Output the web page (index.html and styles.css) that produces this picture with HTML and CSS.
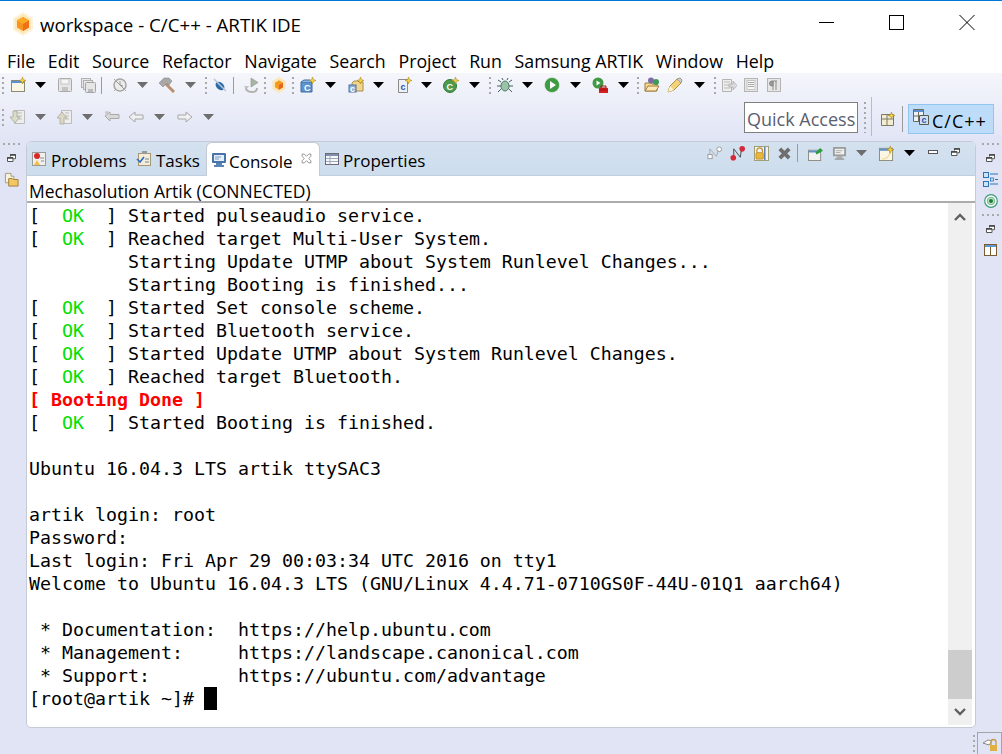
FILE: index.html
```html
<!DOCTYPE html>
<html lang="en">
<head>
<meta charset="utf-8">
<title>workspace - C/C++ - ARTIK IDE</title>
<link rel="stylesheet" href="styles.css">
</head>
<body>
<svg class="defs" aria-hidden="true">
  <symbol id="restore" viewBox="0 0 9 8"><path d="M3.500 2.500V.7h5v4H6.500" fill="#fff" stroke="#555"/><path d="M.5 3.500h5.500v4H.5z" fill="#fff" stroke="#555"/><path d="M3 1h6M0 4h6" stroke="#444" stroke-width="1.400"/></symbol>
  <symbol id="star" viewBox="0 0 8 8"><path d="M4 0l1 3 3 1-3 1-1 3-1-3-3-1 3-1z" fill="#f7d64a" stroke="#b08a20" stroke-width=".7"/></symbol>
</svg>
<header class="titlebar">
  <svg class="logo" viewBox="0 0 20 24"><path d="M10 0l10 6v12l-10 6-10-6V6z" fill="#fdf3dc"/><path d="M10 2l8 5v10l-8 5-8-5V7z" fill="#fce6b8"/><path d="M10 5l6 3.500v7L10 19l-6-3.500v-7z" fill="#f7941d"/><path d="M10 5l6 3.500-6 3.500-6-3.500z" fill="#fbab24"/><path d="M10 12l6-3.500v7L10 19z" fill="#f0701a"/></svg>
  <span class="apptitle">workspace - C/C++ - ARTIK IDE</span>
  <div class="winctl">
    <svg class="wbtn" viewBox="0 0 16 16"><path d="M0 8.500h15" stroke="#000"/></svg>
    <svg class="wbtn" viewBox="0 0 16 16"><rect x=".5" y="1.500" width="14" height="14" fill="none" stroke="#000"/></svg>
    <svg class="wbtn" viewBox="0 0 16 16"><path d="M.5 1l15 15M15.500 1l-15 15" stroke="#000"/></svg>
  </div>
</header>
<nav class="menubar">
  <span>File</span><span>Edit</span><span>Source</span><span>Refactor</span><span>Navigate</span><span>Search</span><span>Project</span><span>Run</span><span>Samsung ARTIK</span><span>Window</span><span>Help</span>
</nav>
<div class="toolbars">
  <div class="tb tb1">
    <i class="grip g-first"></i>
    <svg class="ic m9" viewBox="0 0 16 16"><rect x="1.500" y="3.500" width="13" height="11" fill="#fbf7e4" stroke="#8a8a78"/><path d="M2 4h12v2H2z" fill="#5b8fd0"/><use href="#star" x="9" y="0" width="7" height="7"/></svg>
    <i class="arr m11"></i>
    <svg class="ic m7" viewBox="0 0 16 16"><rect x="1.500" y="1.500" width="13" height="13" rx="1" fill="#e6e6e6" stroke="#a8a8a8"/><rect x="4" y="2" width="8" height="5" fill="#f5f5f5" stroke="#bbb" stroke-width=".8"/><rect x="5" y="10" width="6" height="4" fill="#c4c4c4"/></svg>
    <svg class="ic m5" viewBox="0 0 16 16"><rect x="1.500" y="1.500" width="9" height="9" fill="#e8e8e8" stroke="#b0b0b0"/><rect x="3.500" y="3.500" width="9" height="9" fill="#e8e8e8" stroke="#b0b0b0"/><rect x="5.500" y="5.500" width="10" height="10" rx="1" fill="#e6e6e6" stroke="#a4a4a4"/><rect x="8" y="12" width="5" height="3" fill="#bbb"/></svg>
    <i class="sep m10"></i>
    <svg class="ic m9" viewBox="0 0 16 16"><circle cx="8" cy="8" r="6" fill="#ececec" stroke="#a5a5a5" stroke-width="1.500"/><path d="M4 4l8 8M8 4v4l3 1" stroke="#999" fill="none"/><path d="M2 2l2 2M14 14l-2-2M2 14l2-2" stroke="#aaa"/></svg>
    <i class="arr off m11"></i>
    <svg class="ic m10" viewBox="0 0 16 16"><path d="M6 6l9 9" stroke="#b89070" stroke-width="3"/><path d="M0 6l5-5h5l3 3-3 4-2-2-4 4z" fill="#a8a8a8" stroke="#8c8c8c" stroke-width=".6"/></svg>
    <i class="arr off m9"></i>
    <i class="grip m5"></i>
    <svg class="ic m5" viewBox="0 0 16 16"><ellipse cx="8" cy="9" rx="5" ry="3.500" transform="rotate(40 8 9)" fill="#2b6ca8"/><path d="M2 2l12 12" stroke="#b8c4d8" stroke-width="1.500"/></svg>
    <i class="sep m9"></i>
    <svg class="ic m5" viewBox="0 0 16 16"><path d="M8 1l7 4.500-7 4.500z" fill="#a8b4a4" stroke="#8a968a" stroke-width=".6"/><path d="M3 9c-1 4 2 6 6 6s5-2 5-4" fill="none" stroke="#b0b0b0" stroke-width="1.800"/><path d="M1 9h5l-2 3z" fill="#c4c4c4"/></svg>
    <i class="grip m5"></i>
    <svg class="ic m5" viewBox="0 0 20 24"><path d="M10 0l10 6v12l-10 6-10-6V6z" fill="#fbe6bc"/><path d="M10 5l6 3.500v7L10 19l-6-3.500v-7z" fill="#f59a1c"/><path d="M10 12l6-3.500v7L10 19z" fill="#e8641a"/></svg>
    <i class="grip m6"></i>
    <svg class="ic m9" viewBox="0 0 16 16"><path d="M1 5h11v10H1z" fill="#5c94d0" stroke="#3f6da6"/><path d="M1 5l3-2h6l2 2" fill="#8fb8e0" stroke="#3f6da6"/><text class="mini" x="4" y="14">C</text><use href="#star" x="9" y="0" width="7" height="7"/></svg>
    <i class="arr m12"></i>
    <svg class="ic m9" viewBox="0 0 16 16"><path d="M4 6l2-2h4l1 1h4v9H4z" fill="#f1d58c" stroke="#a88c4c"/><rect x="1" y="8" width="7" height="7" fill="#8ab0dc" stroke="#5070a0"/><text class="mini" x="2" y="14.500">c</text><use href="#star" x="9" y="0" width="7" height="7"/></svg>
    <i class="arr m12"></i>
    <svg class="ic m9" viewBox="0 0 16 16"><path d="M2.500 2.500h9v13h-9z" fill="#eef0f4" stroke="#8a8a8a"/><text class="mini blue" x="4.500" y="13">c</text><use href="#star" x="9" y="0" width="7" height="7"/></svg>
    <i class="arr m11"></i>
    <svg class="ic m10" viewBox="0 0 16 16"><circle cx="7" cy="9" r="6.500" fill="#4d9a4c" stroke="#2f7a3a"/><text class="mini wh" x="3.500" y="13">C</text><use href="#star" x="9" y="0" width="7" height="7"/></svg>
    <i class="arr m9"></i>
    <i class="grip m6"></i>
    <svg class="ic m9" viewBox="0 0 16 16"><ellipse cx="8" cy="9" rx="4" ry="5" fill="#9cc4a4" stroke="#4c7870"/><path d="M4 5L1 3M4 9H0M4 12l-3 3M12 5l3-2M12 9h4M12 12l3 3M6 3L5 1M10 3l1-2" stroke="#44605c"/></svg>
    <i class="arr m11"></i>
    <svg class="ic m10" viewBox="0 0 16 16"><circle cx="8" cy="8" r="7.500" fill="#3f9a44" stroke="#e8efe8" stroke-width=".6"/><path d="M6 4l6 4-6 4z" fill="#fff"/></svg>
    <i class="arr m11"></i>
    <svg class="ic m10" viewBox="0 0 16 16"><circle cx="6" cy="6" r="5.500" fill="#3f9a44"/><path d="M4.500 3.500l4 2.500-4 2.500z" fill="#fff"/><path d="M7 11h9v5H7z" fill="#d82020"/><path d="M9 9h5v2H9zM7 13h9" fill="none" stroke="#a01010"/></svg>
    <i class="arr m8"></i>
    <i class="grip m5"></i>
    <svg class="ic m7" viewBox="0 0 16 16"><path d="M1 6h6l1 1h5v7H1z" fill="#f5d890" stroke="#a07c3c"/><path d="M1 14l3-5h11l-3 5z" fill="#fbe8b4" stroke="#a07c3c"/><circle cx="7" cy="3.500" r="3" fill="#7d6aa8"/><circle cx="12" cy="5" r="3" fill="#3c9a58"/></svg>
    <svg class="ic m11" viewBox="0 0 16 16"><path d="M1 15l2-6 7-7 4 4-7 7z" fill="#f3d27a" stroke="#b09040"/><path d="M10 2l3-1 2 2-1 3z" fill="#cfcfcf" stroke="#999"/><path d="M1 15l2-6 4 4z" fill="#fdf3d0"/></svg>
    <i class="arr m9"></i>
    <i class="grip m5"></i>
    <svg class="ic m6" viewBox="0 0 16 16"><path d="M1.500 2.500h9v12h-9z" fill="#eee" stroke="#b4b4b4"/><path d="M3 5h6M3 8h5M3 11h6" stroke="#bbb"/><path d="M8 7h4V4l4 4.500-4 4.500v-3H8z" fill="#dcdcdc" stroke="#a8a8a8" stroke-width=".7"/></svg>
    <svg class="ic m7" viewBox="0 0 16 16"><rect x="1.500" y="1.500" width="13" height="13" fill="#e6e6e6" stroke="#b4b4b4"/><rect x="4" y="3.500" width="8" height="9" fill="#f6f6f6" stroke="#b4b4b4" stroke-width=".7"/><path d="M5 5.500h6M5 7.500h6M5 9.500h6" stroke="#aaa"/></svg>
    <svg class="ic" viewBox="0 0 16 16"><rect x="1.500" y="1.500" width="13" height="13" fill="#e6e6e6" stroke="#b4b4b4"/><path d="M7 4H6a2.500 2.500 0 000 5h1zM7 4v9M10 4v9M7 4h4" fill="#9a9a9a" stroke="#8a8a8a"/></svg>
  </div>
  <div class="tb2">
    <div class="tb tb2-left">
      <i class="grip g-first"></i>
      <svg class="ic m9" viewBox="0 0 16 16"><path d="M4.500 1.500h10v13h-10z" fill="#eee" stroke="#bbb"/><path d="M7 4h5M7 7h5M7 10h5" stroke="#bbb"/><path d="M3 2h4v6h3l-5 6-5-6h3z" fill="#d8dcc8" stroke="#a8a898" stroke-width=".8"/></svg>
      <i class="arr off m11"></i>
      <svg class="ic m9" viewBox="0 0 16 16"><path d="M4.500 1.500h10v13h-10z" fill="#eee" stroke="#bbb"/><path d="M8 4h4M8 7h4M8 10h4" stroke="#bbb"/><path d="M3 15V9H0l5-6 5 6H7v6z" fill="#dcd8c8" stroke="#a8a898" stroke-width=".8"/></svg>
      <i class="arr off m11"></i>
      <svg class="ic m8" viewBox="0 0 16 16"><path d="M1 7l5-4v2.500h9v4H6V12z" fill="#d8d8d8" stroke="#aaa"/><circle cx="3" cy="4" r="2" fill="#c8c8c8"/></svg>
      <svg class="ic m10" viewBox="0 0 16 16"><path d="M1 8l6-5v3h8v4H7v3z" fill="#f0f0f0" stroke="#a8a8a8"/></svg>
      <i class="arr off m12"></i>
      <svg class="ic m10" viewBox="0 0 16 16"><path d="M15 8L9 3v3H1v4h8v3z" fill="#f0f0f0" stroke="#a8a8a8"/></svg>
      <i class="arr off"></i>
    </div>
    <div class="quick">Quick Access</div>
    <i class="grip g-quick"></i>
    <div class="persp">
      <svg class="ic-sm" viewBox="0 0 14 14"><path d="M.500 2.500h12v11H.500z" fill="#f4ecd0" stroke="#7a7a66"/><path d="M.5 7h12M6 3v10" stroke="#7a7a66"/><use href="#star" x="7" y="0" width="7" height="7"/></svg>
      <i class="sep s-persp"></i>
      <div class="perspbtn">
        <svg class="ic-cc" viewBox="0 0 16 16"><path d="M.5.500h10v12H.5z" fill="#eef2f6" stroke="#6a6a5c"/><path d="M1 1h9v2H1z" fill="#5b8fd0"/><path d="M.5 7h5M5.500 3v9" stroke="#6a6a5c"/><path d="M6.500 6.500h9v9h-9z" fill="#d0e0f0" stroke="#5a5a4c"/><text class="mini blue" x="8.500" y="14">c</text></svg>
        <span>C/C++</span>
      </div>
    </div>
  </div>
</div>
<main class="workbench">
  <aside class="trim trim-left">
    <i class="hgrip"></i>
    <svg class="res"><use href="#restore"/></svg>
    <svg class="tr-ic" viewBox="0 0 16 16"><path d="M1.500 1.500h6v3h3v7h-9z" fill="#f7f2e0" stroke="#aa9a70"/><path d="M5 7h4l1 1h5v7H5z" fill="#f3c860" stroke="#a07c3c"/></svg>
  </aside>
  <section class="panel">
    <div class="tabbar">
      <div class="tab t-problems">
        <svg class="ic" viewBox="0 0 16 16"><rect x="1.500" y="1.500" width="13" height="13" fill="#f2f0ea" stroke="#9a9a9a"/><circle cx="6" cy="5" r="3" fill="#d82828"/><path d="M3 14l3-5 3 5z" fill="#f2c040"/><path d="M9 7h4M10 10h3" stroke="#8888a8"/></svg>
        <span>Problems</span>
      </div>
      <div class="tab t-tasks">
        <svg class="ic" viewBox="0 0 16 16"><rect x="2.500" y="2.500" width="12" height="12" fill="#f4ecd8" stroke="#a89870"/><rect x="6" y="0" width="5" height="3" fill="#999"/><path d="M1 8l3 3 4-5" fill="none" stroke="#2c6cc0" stroke-width="1.600"/><path d="M9 8h4M9 11h4" stroke="#6a8ab0"/></svg>
        <span>Tasks</span>
      </div>
      <div class="tab active">
        <svg class="ic" viewBox="0 0 16 16"><rect x="1" y="1" width="14" height="10" rx="1" fill="#4a74a8"/><rect x="3" y="3" width="10" height="6" fill="#e4eef8"/><path d="M4 5h6M4 7h4" stroke="#7a9cc4"/><path d="M5 11h6v2h2v2H3v-2h2z" fill="#5a84b4"/></svg>
        <span>Console</span>
        <svg class="close" viewBox="0 0 10 10"><path d="M1 1l2 0 2 2 2-2 2 0 0 2-2 2 2 2 0 2-2 0-2-2-2 2-2 0 0-2 2-2-2-2z" fill="#fff" stroke="#8a8a8a" stroke-width=".8"/></svg>
      </div>
      <div class="tab t-props">
        <svg class="ic" viewBox="0 0 16 16"><rect x="1.500" y="2.500" width="13" height="11" fill="#f8f8f8" stroke="#6a6a7a"/><path d="M2 3h12v2H2z" fill="#8090b0"/><path d="M2 7.500h12M2 10.500h12M6 5v8" stroke="#a0a8bc"/></svg>
        <span>Properties</span>
      </div>
      <div class="viewtools">
        <svg class="ic i14 m8" viewBox="0 0 16 16"><rect x="1" y="9" width="4.500" height="4.500" fill="#fff" stroke="#999"/><circle cx="13" cy="3.500" r="2.500" fill="#fff" stroke="#999"/><path d="M3 9V3l7 8 2-6" fill="none" stroke="#aaa"/></svg>
        <svg class="ic i14 m9" viewBox="0 0 16 16"><circle cx="3.500" cy="12.500" r="3" fill="#d42a3a"/><circle cx="13" cy="3" r="3" fill="#d42a3a"/><path d="M4 10V3l7 9 1-7" fill="none" stroke="#444"/></svg>
        <svg class="ic i14 m8" viewBox="0 0 16 16"><rect x=".5" y=".5" width="15" height="15" fill="#f2f2f2" stroke="#9a9a70"/><path d="M11.500 1v14" stroke="#5a78a8" stroke-width="1.500"/><path d="M3 7V5a3 3 0 016 0v2" fill="none" stroke="#c09030" stroke-width="1.300"/><rect x="2" y="7" width="8" height="7" rx="1" fill="#eab53c" stroke="#a87c20" stroke-width=".6"/></svg>
        <svg class="ic i14 m5" viewBox="0 0 16 16"><path d="M3 3l10 10M13 3L3 13" stroke="#6e6e6e" stroke-width="4"/></svg>
        <i class="sep s-view"></i>
        <svg class="ic i14 m9" viewBox="0 0 16 16"><rect x=".5" y="4.500" width="13" height="11" fill="#f2f2f2" stroke="#8a8a80"/><path d="M1 5h12v2H1z" fill="#5a94d0"/><path d="M8 7l5-5 3 3-5 3-2 1z" fill="#2f9a3f"/></svg>
        <svg class="ic i14 m9" viewBox="0 0 16 16"><rect x="1" y="1" width="14" height="10" rx="1" fill="#9c9c9c"/><rect x="3" y="3" width="10" height="6" fill="#f0f0f0"/><path d="M4 5h7M4 7h5" stroke="#aaa"/><path d="M5 11h6v2h2v2H3v-2h2z" fill="#a8a8a8"/></svg>
        <i class="arr off m12"></i>
        <svg class="ic i14 m10" viewBox="0 0 16 16"><rect x=".5" y="2.500" width="14" height="13" fill="#fbf7e4" stroke="#8a8a78"/><path d="M1 3h13v2H1z" fill="#5b8fd0"/><path d="M3 14c5 0 8-3 9-8" fill="none" stroke="#f2dc9c" stroke-width="1.500"/><use href="#star" x="8" y="0" width="8" height="8"/></svg>
        <i class="arr m13"></i>
        <svg class="winbtn m13" viewBox="0 0 10 4"><rect x=".5" y=".5" width="9" height="3" fill="#fff" stroke="#555"/></svg>
        <svg class="res r-view"><use href="#restore"/></svg>
      </div>
    </div>
    <div class="contitle">Mechasolution Artik (CONNECTED)</div>
    <div class="conbody">
      <div class="console">
        <div class="ln">[  <span class="ok">OK</span>  ] Started pulseaudio service.</div>
        <div class="ln">[  <span class="ok">OK</span>  ] Reached target Multi-User System.</div>
        <div class="ln">         Starting Update UTMP about System Runlevel Changes...</div>
        <div class="ln">         Starting Booting is finished...</div>
        <div class="ln">[  <span class="ok">OK</span>  ] Started Set console scheme.</div>
        <div class="ln">[  <span class="ok">OK</span>  ] Started Bluetooth service.</div>
        <div class="ln">[  <span class="ok">OK</span>  ] Started Update UTMP about System Runlevel Changes.</div>
        <div class="ln">[  <span class="ok">OK</span>  ] Reached target Bluetooth.</div>
        <div class="ln err">[ Booting Done ]</div>
        <div class="ln">[  <span class="ok">OK</span>  ] Started Booting is finished.</div>
        <div class="ln"></div>
        <div class="ln">Ubuntu 16.04.3 LTS artik ttySAC3</div>
        <div class="ln"></div>
        <div class="ln">artik login: root</div>
        <div class="ln">Password:</div>
        <div class="ln">Last login: Fri Apr 29 00:03:34 UTC 2016 on tty1</div>
        <div class="ln">Welcome to Ubuntu 16.04.3 LTS (GNU/Linux 4.4.71-0710GS0F-44U-01Q1 aarch64)</div>
        <div class="ln"></div>
        <div class="ln"> * Documentation:  https://help.ubuntu.com</div>
        <div class="ln"> * Management:     https://landscape.canonical.com</div>
        <div class="ln"> * Support:        https://ubuntu.com/advantage</div>
        <div class="ln">[root@artik ~]# <span class="cursor"></span></div>
      </div>
      <div class="scrollbar">
        <div class="sb-btn sb-up"><svg class="chev" viewBox="0 0 12 8"><path d="M1 7l5-5 5 5" fill="none" stroke="#606060" stroke-width="2.400"/></svg></div>
        <div class="sb-track"></div>
        <div class="sb-thumb"></div>
        <div class="sb-btn"><svg class="chev" viewBox="0 0 12 8"><path d="M1 1l5 5 5-5" fill="none" stroke="#606060" stroke-width="2.400"/></svg></div>
      </div>
    </div>
  </section>
  <aside class="trim trim-right">
    <i class="hgrip"></i>
    <svg class="res"><use href="#restore"/></svg>
    <svg class="tr-ic" viewBox="0 0 15 15"><rect x=".5" y=".5" width="5" height="5" fill="#cfe2f6" stroke="#2a74b8"/><rect x=".5" y="9.500" width="5" height="5" fill="#cfe2f6" stroke="#2a74b8"/><rect x="7.500" y="6" width="3" height="3" fill="#cfe2f6" stroke="#2a74b8" stroke-width=".8"/><path d="M7 2h8M12 7.500h3M7 12h8" stroke="#2a74b8"/></svg>
    <svg class="tr-target" viewBox="0 0 14 14"><circle cx="7" cy="7" r="6.300" fill="#fff" stroke="#3c9a78" stroke-width="1.200"/><circle cx="7" cy="7" r="3.800" fill="#bfe0cc" stroke="#5aa880" stroke-width=".8"/><circle cx="7" cy="7" r="2" fill="#1f7a2c"/></svg>
    <i class="hgrip h2"></i>
    <svg class="res"><use href="#restore"/></svg>
    <svg class="tr-last" viewBox="0 0 13 12"><rect x=".5" y=".5" width="12" height="11" fill="#fff" stroke="#7a5c30"/><path d="M1 1h11v2H1z" fill="#5b9ad8"/><path d="M6.500 3v8" stroke="#7a5c30"/></svg>
  </aside>
</main>
<footer class="statusbar">
  <i class="grip g-status"></i>
  <div class="fastview"><svg class="ic" viewBox="0 0 16 16"><path d="M1 7l5-3 4 1-3 4z" fill="#fff" stroke="#888"/><path d="M8 9h7v6H8z" fill="#e0b040"/><path d="M9 9V6a2.500 2.500 0 015 0v3" fill="none" stroke="#c49a40" stroke-width="1.300"/></svg></div>
</footer>
</body>
</html>
```
FILE: styles.css
```css
* { box-sizing: border-box; }
html, body { margin: 0; padding: 0; }
body {
  width: 1002px;
  height: 754px;
  overflow: hidden;
  display: flex;
  flex-direction: column;
  background: #e0e4f5;
  font-family: "Open Sans", "Noto Sans", sans-serif;
  color: #000;
}
i { display: block; flex: none; }
svg { display: block; flex: none; }
.defs { position: absolute; width: 0; height: 0; }

.titlebar {
  height: 44px;
  flex: none;
  background: #fff;
  border-top: 1px solid #0078d7;
  display: flex;
  align-items: center;
  padding-left: 13px;
}
.logo { width: 20px; height: 24px; margin-right: 7px; margin-top: 2px; }
.apptitle { font-size: 18.7px; line-height: 24px; color: #000; margin-top: 4px; }
.winctl { margin-left: auto; display: flex; gap: 54px; padding-right: 27px; margin-top: -1px; }
.wbtn { width: 16px; height: 16px; }

.menubar {
  height: 29px;
  flex: none;
  background: #fff;
  display: flex;
  align-items: center;
  gap: 12.7px;
  padding-left: 7px;
  padding-top: 4px;
  font-size: 17.8px;
}

.toolbars {
  flex: none;
  height: 68px;
  background: linear-gradient(#f5f6fb, #e0e4f5);
}
.tb { display: flex; align-items: center; }
.tb1 { height: 24px; padding-left: 2px; }
.tb2 { height: 44px; display: flex; }
.tb2-left { height: 40px; padding-left: 2px; width: 744px; flex: none; }
.ic { width: 16px; height: 16px; }
.i14 { width: 15px; height: 15px; }
.m5 { margin-right: 5px; }
.m6 { margin-right: 6px; }
.m7 { margin-right: 7px; }
.m8 { margin-right: 8px; }
.m9 { margin-right: 9px; }
.m10 { margin-right: 10px; }
.m11 { margin-right: 11px; }
.m12 { margin-right: 12px; }
.m13 { margin-right: 13px; }
.arr {
  width: 11px;
  height: 6px;
  background: #000;
  clip-path: polygon(0 0, 100% 0, 50% 100%);
}
.arr.off { background: #6e6e6e; }
.grip {
  width: 2px;
  height: 17px;
  background: repeating-linear-gradient(#a8a8a8 0 2px, transparent 2px 5px);
}
.g-first { margin-right: 6px; }
.sep { width: 1px; height: 17px; background: #9a9a9a; }

.quick {
  width: 114px;
  height: 31px;
  margin-top: 5px;
  background: #fff;
  border: 1px solid #7f7f7f;
  font-size: 18px;
  line-height: 33px;
  padding-left: 2px;
  color: #5a6070;
  white-space: nowrap;
  overflow: hidden;
}
.g-quick { margin: 5px 0 0 6px; height: 31px; }
.persp {
  margin-left: 5px;
  width: 131px;
  height: 39px;
  border-left: 1px solid #b8bcc8;
  background: linear-gradient(#eef0fa, #e2e6f6);
  display: flex;
  align-items: center;
  padding-left: 9px;
  padding-top: 4px;
}
.ic-sm { width: 14px; height: 14px; }
.s-persp { margin: 0 5px 0 7px; height: 26px; }
.perspbtn {
  width: 86px;
  height: 30px;
  background: #bcdcf9;
  border: 1px solid #93c6ef;
  display: flex;
  align-items: center;
  padding-left: 4px;
  gap: 3px;
  font-size: 18px;
  letter-spacing: 1px;
}
.perspbtn span { margin-top: 5px; }
.ic-cc { width: 16px; height: 16px; margin-top: -3px; }
.mini { font: bold 9px "Liberation Sans", sans-serif; fill: #fff; }
.mini.blue { fill: #2a50b0; }

.workbench { flex: 1; display: flex; min-height: 0; height: 587px; }
.trim { width: 26px; flex: none; display: flex; flex-direction: column; align-items: center; padding-top: 2px; }
.trim-left { padding-right: 3px; }
.trim-right { padding-left: 3px; }
.hgrip {
  width: 17px;
  height: 2px;
  background: repeating-linear-gradient(90deg, #a8a8a8 0 2px, transparent 2px 5px);
}
.res { width: 9px; height: 8px; margin-top: 9px; }
.tr-ic { width: 15px; height: 15px; margin-top: 10px; }
.tr-target { width: 14px; height: 14px; margin-top: 7px; }
.h2 { margin-top: 6px; }
.tr-last { width: 13px; height: 12px; margin-top: 11px; }

.panel {
  width: 950px;
  height: 587px;
  display: flex;
  flex-direction: column;
  background: #fff;
  border: 1px solid #c6cad6;
  border-radius: 6px 6px 5px 5px;
  overflow: hidden;
}
.tabbar {
  height: 34px;
  flex: none;
  display: flex;
  background: linear-gradient(#d4e1ef, #cddded);
  border-bottom: 1px solid #c0cfdf;
  font-size: 17px;
  position: relative;
  padding-left: 4px;
}
.tab { display: flex; align-items: center; gap: 4px; height: 34px; white-space: nowrap; }
.tab span { line-height: 34px; margin-top: 4px; }
.t-problems { width: 105px; }
.t-tasks { width: 70px; }
.tab.active {
  width: 114px;
  background: #fff;
  height: 34px;
  border-radius: 6px 6px 0 0;
  padding-left: 4px;
  gap: 2px;
  border-left: 1px solid #c6cad6;
  border-right: 1px solid #c6cad6;
  border-top: 1px solid #c6cad6;
}
.close { width: 11px; height: 11px; margin-left: 6px; margin-top: -2px; }
.t-props { padding-left: 4px; gap: 3px; }
.viewtools {
  margin-left: auto;
  display: flex;
  align-items: center;
  height: 22px;
  padding-right: 15px;
}
.s-view { margin-right: 10px; height: 18px; }
.winbtn { width: 10px; height: 4px; margin-top: -2px; }
.r-view { margin-top: -2px; }

.contitle {
  height: 27px;
  flex: none;
  border-bottom: 2px solid #acacac;
  font-size: 17.5px;
  line-height: 30px;
  padding-left: 2px;
  white-space: nowrap;
}
.conbody { flex: 1; display: flex; min-height: 0; padding-right: 3px; padding-bottom: 2px; }
.console {
  flex: 1;
  padding: 1px 0 0 2px;
  font-family: "DejaVu Sans Mono", "Liberation Mono", monospace;
  font-size: 18.27px;
  line-height: 23px;
  color: #000;
  overflow: hidden;
}
.ln { height: 23px; white-space: pre; }
.ok { color: #00e000; }
.err { color: #ff0000; font-weight: bold; }
.cursor { display: inline-block; width: 13px; height: 23px; background: #000; vertical-align: top; margin-left: -1px; }
.scrollbar { width: 24px; flex: none; display: flex; flex-direction: column; background: #f0f0f0; }
.sb-btn { height: 26px; flex: none; display: flex; align-items: center; justify-content: center; }
.sb-up { height: 28px; }
.sb-track { flex: 1; }
.sb-thumb { height: 49px; flex: none; background: #cdcdcd; }
.chev { width: 12px; height: 8px; }

.statusbar {
  height: 26px;
  flex: none;
  display: flex;
  justify-content: flex-end;
  align-items: flex-end;
}
.g-status { margin-right: 2px; margin-bottom: 2px; }
.fastview {
  width: 25px;
  height: 22px;
  border: 1px solid #a5a5a5;
  border-bottom: 0;
  display: flex;
  align-items: center;
  justify-content: center;
}
```
